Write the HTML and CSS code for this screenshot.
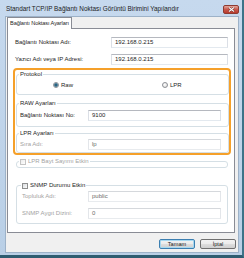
FILE: index.html
```html
<!DOCTYPE html>
<html lang="tr">
<head>
<meta charset="utf-8">
<title>Standart TCP/IP</title>
<link rel="stylesheet" href="styles.css">
</head>
<body>
<div class="window">
  <div class="titlebar">
    <span class="title">Standart TCP/IP Bağlantı Noktası Görüntü Birimini Yapılandır</span>
    <span class="close"><svg width="7" height="5" viewBox="0 0 7 5"><path d="M1 0.5 L6 4.5 M6 0.5 L1 4.5" stroke="#5a1f1a" stroke-width="2"/><path d="M1 0.5 L6 4.5 M6 0.5 L1 4.5" stroke="#fff" stroke-width="1.1"/></svg></span>
  </div>
  <div class="client">
    <div class="tab">Bağlantı Noktası Ayarları</div>
    <div class="panel">
      <div class="row top1"><span>Bağlantı Noktası Adı:</span><div class="input">192.168.0.215</div></div>
      <div class="row top2"><span>Yazıcı Adı veya IP Adresi:</span><div class="input">192.168.0.215</div></div>
      <div class="highlight">
        <fieldset class="grp proto">
          <legend>Protokol</legend>
          <div class="radios">
            <label class="opt"><span class="radio on"></span>Raw</label>
            <label class="opt"><span class="radio"></span>LPR</label>
          </div>
        </fieldset>
        <fieldset class="grp raw">
          <legend>RAW Ayarları</legend>
          <div class="field"><span>Bağlantı Noktası No:</span><div class="input">9100</div></div>
        </fieldset>
        <fieldset class="grp lpr">
          <legend>LPR Ayarları</legend>
          <div class="field dis"><span>Sıra Adı:</span><div class="input dis">lp</div></div>
        </fieldset>
      </div>
      <fieldset class="grp bayt">
        <legend class="cblegend dis"><span class="cb dis"></span>LPR Bayt Sayımı Etkin</legend>
      </fieldset>
      <fieldset class="grp snmp">
        <legend class="cblegend"><span class="cb"></span>SNMP Durumu Etkin</legend>
        <div class="field dis s1"><span>Topluluk Adı:</span><div class="input dis">public</div></div>
        <div class="field dis s2"><span>SNMP Aygıt Dizini:</span><div class="input dis">0</div></div>
      </fieldset>
    </div>
    <div class="buttons">
      <button class="btn def">Tamam</button>
      <button class="btn">İptal</button>
    </div>
  </div>
</div>
</body>
</html>
```
FILE: styles.css
```css
* { box-sizing: border-box; }
html, body { margin: 0; padding: 0; }
body {
  width: 244px; height: 258px; overflow: hidden;
  font-family: "Liberation Sans", Arial, sans-serif;
  font-size: 6px; line-height: 7px; color: #1e1e1e;
}
.window {
  width: 244px; height: 258px;
  background: linear-gradient(#c6d9ee, #b9cfe6);
  border-right: 2px solid #3d7388;
  border-bottom: 3px solid #2e5c70;
  padding: 0 3px 2px 5px;
  display: flex; flex-direction: column;
}
.titlebar { height: 16px; display: flex; justify-content: space-between; align-items: flex-start; }
.title { margin-top: 5px; margin-left: 1px; font-size: 6.4px; color: #1b1b1b; white-space: nowrap; }
.close {
  width: 16px; height: 9px; margin-top: 5px;
  background: linear-gradient(#e4a79c, #c9584b 50%, #b73a2e);
  border: 1px solid #8d3b32; border-radius: 2px;
  display: flex; align-items: center; justify-content: center;
}
.client {
  flex: 1; background: #f0f0f0;
  border: 1px solid #9db2c8;
  padding: 0 0 0 1px;
  display: flex; flex-direction: column;
}
.tab {
  width: 65px; height: 12px; margin-bottom: -1px;
  position: relative; z-index: 1;
  background: #fff; border: 1px solid #898c95; border-bottom: none;
  display: flex; align-items: center; justify-content: center;
  white-space: nowrap; font-size: 5.6px; letter-spacing: -0.1px;
}
.panel {
  width: 228px; height: 205px;
  background: #fff; border: 1px solid #898c95;
  display: flex; flex-direction: column; align-items: flex-start;
}
.row {
  display: grid; grid-template-columns: 96px 117px;
  padding-left: 7px; align-items: center; white-space: nowrap;
}
.top1 { margin-top: 8px; }
.top2 { margin-top: 6px; }
.input {
  height: 11px; padding-left: 3px;
  display: flex; align-items: center;
  background: #fff;
  border: 1px solid; border-color: #b5b8bf #dbdfe6 #e3e9ef #dbdfe6;
  color: #1e1e1e;
}
.input.dis { border-color: #d5d8dc #e3e6ea #e8ebee #e3e6ea; color: #6d6d6d; }
.highlight {
  margin: 3px 0 0 5px; width: 218px; height: 87px;
  border: 2px solid #f5a02a; border-radius: 4px;
  padding: 0 0 0 1px;
}
.grp {
  margin: 0; padding: 0 0 0 3px; min-width: 0;
  border: 1px solid #d5dfe5; border-radius: 3px;
}
.grp legend { padding: 0 1px; margin-left: -1px; line-height: 7px; white-space: nowrap; }
.highlight .grp { width: 213px; }
.proto { margin-top: 1px; padding-bottom: 5px; }
.radios {
  margin-top: 3px; height: 8px; padding-left: 33px;
  display: grid; grid-template-columns: 109px auto; align-items: center;
}
.opt { display: flex; align-items: center; gap: 2px; }
.radio {
  width: 6px; height: 6px; border-radius: 50%;
  border: 1px solid #8d9095;
  background: radial-gradient(circle at 40% 40%, #ffffff, #d6d6d6);
}
.radio.on { background: radial-gradient(circle, #2b6582 0 1.3px, #8fb6cc 2px, #e6eef3 3px); }
.field { display: grid; grid-template-columns: 68px 133px; align-items: center; white-space: nowrap; }
.raw { margin-top: 5px; padding-bottom: 5px; }
.raw .field { margin-top: 3px; }
.lpr { margin-top: 3px; padding-bottom: 2px; }
.lpr .field { margin-top: 2px; }
.dis > span, .cblegend.dis { color: #a3a3a3; }
.cblegend { display: flex; align-items: center; gap: 2px; }
.cb {
  width: 6px; height: 6px; border: 1px solid #8e8f8f;
  background: linear-gradient(135deg, #d9dcdf, #fbfbfb);
}
.cb.dis { border-color: #c4c4c4; background: linear-gradient(135deg, #ececec, #fdfdfd); }
.bayt { margin: 3px 0 0 8px; width: 212px; padding-bottom: 2px; }
.snmp { margin: 14px 0 0 8px; width: 212px; padding: 0 0 4px 5px; }
.snmp .field { grid-template-columns: 66px 133px; }
.s1 { margin-top: 2px; }
.s2 { margin-top: 6px; }
.buttons {
  margin-top: 6px; padding-right: 2px;
  display: flex; justify-content: flex-end; gap: 5px;
}
.btn {
  width: 36px; height: 10px; padding: 0;
  font: inherit; font-size: 5.6px; line-height: 8px; color: #1e1e1e;
  border: 1px solid #707070; border-radius: 2px;
  background: linear-gradient(#f2f2f2 0, #ebebeb 50%, #dddddd 51%, #cfcfcf);
}
.btn.def { border-color: #3c7fb1; box-shadow: inset 0 0 0 1px #a7d8f0; }
```
